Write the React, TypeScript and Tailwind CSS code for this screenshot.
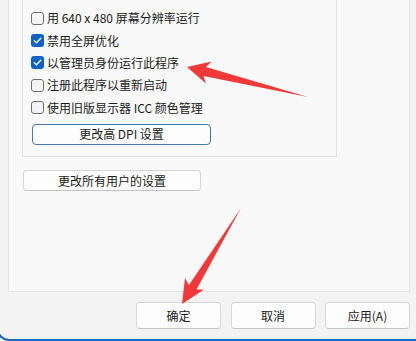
import React from "react";

const font = { fontFamily: '"Microsoft YaHei UI", "Noto Sans CJK SC", "Noto Sans", sans-serif' };

function Check({ checked }: { checked: boolean }) {
  if (checked) {
    return (
      <span className="flex h-[13px] w-[13px] shrink-0 items-center justify-center rounded-[3px] bg-[#0f63c6]">
        <svg width="11" height="11" viewBox="0 0 11 11">
          <path d="M2.2 5.6 L4.4 7.8 L8.8 3.2" fill="none" stroke="#ffffff" strokeWidth="1.3" strokeLinecap="round" strokeLinejoin="round" />
        </svg>
      </span>
    );
  }
  return <span className="h-[13px] w-[13px] shrink-0 rounded-[3px] border border-[#6f6f6f] bg-[#f4f4f4]" />;
}

const rows: { label: string; checked: boolean }[] = [
  { label: "用 640 x 480 屏幕分辨率运行", checked: false },
  { label: "禁用全屏优化", checked: true },
  { label: "以管理员身份运行此程序", checked: true },
  { label: "注册此程序以重新启动", checked: false },
  { label: "使用旧版显示器 ICC 颜色管理", checked: false },
];

export default function App() {
  return (
    <div className="relative h-[341px] w-[416px] overflow-hidden bg-[#f3f3f3] text-[12px] text-[#1b1b1b]" style={font}>
      <div className="-ml-[3px] flex h-[341px] w-[419px] flex-col rounded-bl-[12px] border-b-2 border-l-2 border-[#1a6cc0] pl-[1px]">
        <div className="ml-[8px] flex h-[292px] w-[402px] flex-col border-x border-b border-[#e3e3e3] bg-[#f9f9f9]">
          <div className="ml-[13px] flex h-[157px] w-[315px] flex-col border-x border-b border-[#e3e3e3] pl-[8px] pt-[7px]">
            {rows.map((r) => (
              <div key={r.label} className="flex h-[22.4px] items-center gap-[3px] leading-none">
                <Check checked={r.checked} />
                <span>{r.label}</span>
              </div>
            ))}
            <div className="ml-[1px] mt-[5px] flex h-[21px] w-[179px] items-center justify-center rounded-[4px] border border-[#4a76b0] bg-[#fdfdfd] leading-none">
              更改高 DPI 设置
            </div>
          </div>
          <div className="ml-[14px] mt-[13px] flex h-[21px] w-[178px] items-center justify-center rounded-[4px] border border-[#d6d6d6] border-b-[#c4c4c4] bg-[#fdfdfd] leading-none">
            更改所有用户的设置
          </div>
        </div>
        <div className="mt-[10px] flex justify-end gap-[9.5px] pr-[6px]">
          {["确定", "取消", "应用(A)"].map((t) => (
            <div key={t} className="flex h-[27px] w-[85px] items-center justify-center rounded-[4px] border border-[#d8d8d8] border-b-[#c6c6c6] bg-[#fdfdfd] leading-none">
              {t}
            </div>
          ))}
        </div>
      </div>
      <svg className="pointer-events-none absolute left-0 top-0" width="416" height="341" viewBox="0 0 416 341">
        <polygon points="187,67 211.5,61.5 206,67 308,97 203.5,76 206,83.5" fill="#f2393a" />
        <polygon points="182,304 185,278 189,285 241,208 196.5,289.5 204,289.5" fill="#f2393a" />
      </svg>
    </div>
  );
}
